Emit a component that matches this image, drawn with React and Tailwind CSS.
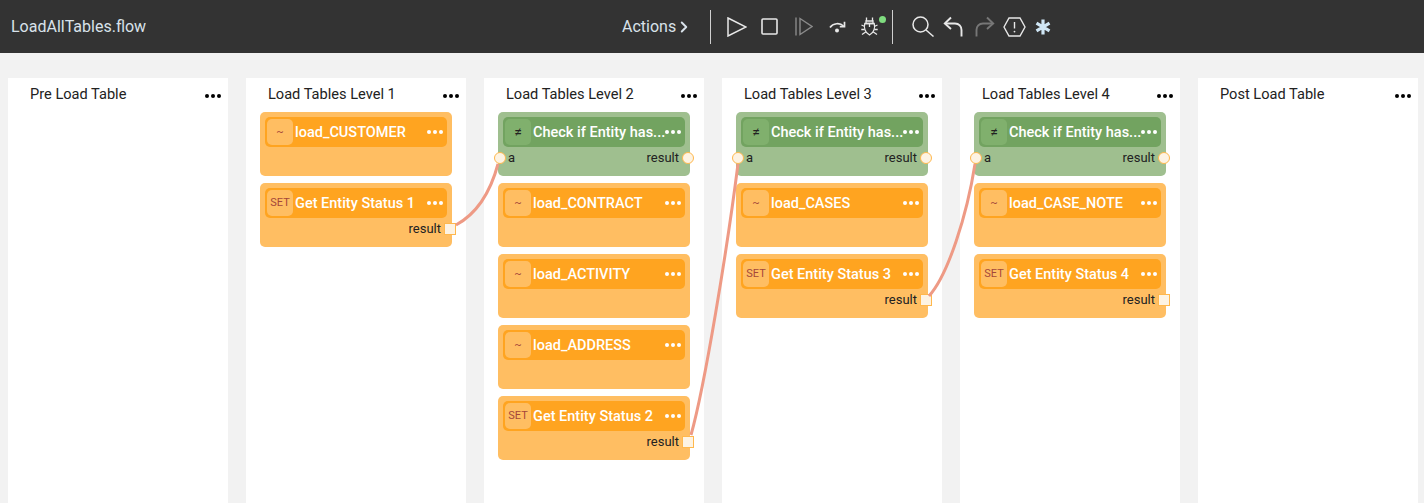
import { ChevronRight } from "lucide-react";

const columns = [
  { title: "Pre Load Table", nodes: [] },
  {
    title: "Load Tables Level 1",
    nodes: [
      { badge: "~", label: "load_CUSTOMER" },
      { badge: "SET", label: "Get Entity Status 1", out: "square" },
    ],
  },
  {
    title: "Load Tables Level 2",
    nodes: [
      { badge: "≠", label: "Check if Entity has...", check: true },
      { badge: "~", label: "load_CONTRACT" },
      { badge: "~", label: "load_ACTIVITY" },
      { badge: "~", label: "load_ADDRESS" },
      { badge: "SET", label: "Get Entity Status 2", out: "square" },
    ],
  },
  {
    title: "Load Tables Level 3",
    nodes: [
      { badge: "≠", label: "Check if Entity has...", check: true },
      { badge: "~", label: "load_CASES" },
      { badge: "SET", label: "Get Entity Status 3", out: "square" },
    ],
  },
  {
    title: "Load Tables Level 4",
    nodes: [
      { badge: "≠", label: "Check if Entity has...", check: true },
      { badge: "~", label: "load_CASE_NOTE" },
      { badge: "SET", label: "Get Entity Status 4", out: "square" },
    ],
  },
  { title: "Post Load Table", nodes: [] },
];

function Dots({ className }) {
  return (
    <div className={`flex items-center gap-[2px] ${className}`}>
      <span className="w-[4px] h-[4px] rounded-full bg-current" />
      <span className="w-[4px] h-[4px] rounded-full bg-current" />
      <span className="w-[4px] h-[4px] rounded-full bg-current" />
    </div>
  );
}

function Node({ node }) {
  const { badge, label, check, out } = node;
  return (
    <div className={`relative h-[64px] rounded-[5px] p-[5px] ${check ? "bg-[#9fbf8f]" : "bg-[#ffbe62]"}`}>
      <div className={`flex items-center h-[30px] rounded-[5px] pl-[2px] pr-[4px] ${check ? "bg-[#72a360]" : "bg-[#ffa420]"}`}>
        <div
          className={`flex items-center justify-center w-[26px] h-[26px] shrink-0 rounded-[5px] ${
            check ? "bg-[#80b06d] text-[#222] text-[14px]" : "bg-[#ffbe62] text-[#a5473a] text-[11px]"
          }`}
        >
          {badge}
        </div>
        <div className="ml-[2px] flex-1 pt-[1px] text-[14.5px] font-medium text-white whitespace-nowrap overflow-hidden">{label}</div>
        <Dots className="text-white" />
      </div>
      {check && (
        <>
          <span className="absolute left-[10px] top-[38px] text-[13px] leading-[16px] text-[#222]">a</span>
          <span className="absolute right-[11px] top-[38px] text-[13px] leading-[16px] text-[#222]">result</span>
          <span className="absolute -left-[4px] top-[40px] w-[12px] h-[12px] rounded-full bg-[#fdf3e3] border border-[#ffb84d]" />
          <span className="absolute -right-[4px] top-[40px] w-[12px] h-[12px] rounded-full bg-[#fdf3e3] border border-[#ffb84d]" />
        </>
      )}
      {out === "square" && (
        <>
          <span className="absolute right-[11px] top-[38px] text-[13px] leading-[16px] text-[#222]">result</span>
          <span className="absolute -right-[4px] top-[40px] w-[12px] h-[12px] bg-[#fdf3e3] border border-[#ffb84d]" />
        </>
      )}
    </div>
  );
}

function Column({ column }) {
  return (
    <div className="w-[220px] shrink-0 bg-white px-[14px] pt-[8px]">
      <div className="relative flex h-[17px] items-center pl-[8px] text-[14.6px] text-[#222]">
        {column.title}
        <Dots className="absolute right-[-7px] top-[8px] text-black" />
      </div>
      <div className="mt-[9px] flex flex-col gap-[7px]">
        {column.nodes.map((node) => (
          <Node key={node.label} node={node} />
        ))}
      </div>
    </div>
  );
}

function Sep() {
  return <div className="w-px h-[34px] bg-[#cfcfcf]" />;
}

export default function App() {
  return (
    <div className="relative w-[1424px] h-[503px] overflow-hidden bg-[#f2f2f2] font-['Roboto',sans-serif]">
      <header className="flex items-center h-[53px] bg-[#333333] pl-[11px]">
        <div className="w-[611px] pt-[1px] text-[16px] text-[#d9e2ea]">LoadAllTables.flow</div>
        <div className="flex items-center w-[88px] pt-[1px] text-[16px] text-[#d9e2ea]">
          Actions
          <ChevronRight size={18} strokeWidth={2.6} className="-ml-[1px]" />
        </div>
        <Sep />
        <svg width="20" height="20" viewBox="0 0 20 20" fill="none" stroke="#e8e8e8" strokeWidth="1.5" className="ml-[16px]">
          <path d="M1 1 L19 10 L1 19 Z" />
        </svg>
        <svg width="17" height="17" viewBox="0 0 17 17" fill="none" stroke="#e8e8e8" strokeWidth="1.6" className="ml-[14px]">
          <rect x="1" y="1" width="15" height="15" rx="1" />
        </svg>
        <svg width="18" height="19" viewBox="0 0 18 19" fill="none" stroke="#8a8a8a" strokeWidth="1.4" className="ml-[17px]">
          <path d="M1 0.5 V18.5" />
          <path d="M5 1.5 L17 9.5 L5 17.5 Z" />
        </svg>
        <svg width="17" height="12" viewBox="0 0 17 12" fill="none" stroke="#e8e8e8" strokeWidth="1.7" className="ml-[16px]">
          <path d="M1 6.5 C4 2 11 1.5 14.5 5" />
          <path d="M15.5 0.8 V5.6 H10.8" />
          <circle cx="8" cy="9.6" r="2" fill="#e8e8e8" stroke="none" />
        </svg>
        <div className="relative ml-[15px]">
          <svg width="17" height="19" viewBox="0 0 17 19" fill="none" stroke="#e8e8e8" strokeWidth="1.3" className="block">
            <path d="M5.5 0.5 V4 M11.5 0.5 V4" />
            <path d="M5 4 H12 V6.5 H5 Z" />
            <path d="M3.8 6.5 H13.2 C14.2 10 13.5 15.5 8.5 18 C3.5 15.5 2.8 10 3.8 6.5 Z" />
            <path d="M8.5 6.5 V10" />
            <path d="M0.5 8 L3.8 9.5 M16.5 8 L13.2 9.5 M0.3 12.5 H3.6 M16.7 12.5 H13.4 M1 17.5 L5 14.8 M16 17.5 L12 14.8" />
          </svg>
          <span className="absolute -right-[8px] -top-[1px] w-[7px] h-[7px] rounded-full bg-[#7fdc7f]" />
        </div>
        <div className="ml-[14px]">
          <Sep />
        </div>
        <svg width="22" height="21" viewBox="0 0 22 21" fill="none" stroke="#e8e8e8" strokeWidth="1.5" className="ml-[19px]">
          <circle cx="8.5" cy="8.5" r="7.5" />
          <path d="M14 14 L21.5 20.5" />
        </svg>
        <svg width="20" height="21" viewBox="0 0 20 21" fill="none" stroke="#e8e8e8" strokeWidth="1.9" className="ml-[9px]">
          <path d="M8 1.5 L1.8 7.5 L8 13" />
          <path d="M2 7.5 H12 C16 7.5 18.5 10.5 18.5 14 V20.5" />
        </svg>
        <svg width="20" height="21" viewBox="0 0 20 21" fill="none" stroke="#777777" strokeWidth="1.9" className="ml-[12px]">
          <path d="M12 1.5 L18.2 7.5 L12 13" />
          <path d="M18 7.5 H8 C4 7.5 1.5 10.5 1.5 14 V20.5" />
        </svg>
        <svg width="23" height="20" viewBox="0 0 23 20" fill="none" stroke="#e8e8e8" strokeWidth="1.4" className="ml-[8px]">
          <path d="M1 10 L6 1 H17 L22 10 L17 19 H6 Z" />
          <path d="M11.5 5 V11.5" />
          <circle cx="11.5" cy="14.6" r="0.9" fill="#e8e8e8" stroke="none" />
        </svg>
        <svg width="16" height="16" viewBox="0 0 16 16" fill="none" stroke="#cfe6f5" strokeWidth="3.2" className="ml-[9px] mt-[1px]">
          <path d="M8 0.5 V15.5 M1.5 4.2 L14.5 11.8 M14.5 4.2 L1.5 11.8" />
        </svg>
      </header>

      <main className="flex gap-[18px] pl-[8px] pt-[25px] h-[450px]">
        {columns.map((column) => (
          <Column key={column.title} column={column} />
        ))}
      </main>

      <svg className="absolute left-0 top-0 pointer-events-none" width="1424" height="503" fill="none" stroke="#ee9a85" strokeWidth="3">
        <path d="M456 225 C478 213 491 190 498 164" />
        <path d="M691 435 C705 385 727 250 738 164" />
        <path d="M929 296 C948 275 967 215 975 164" />
      </svg>
    </div>
  );
}
